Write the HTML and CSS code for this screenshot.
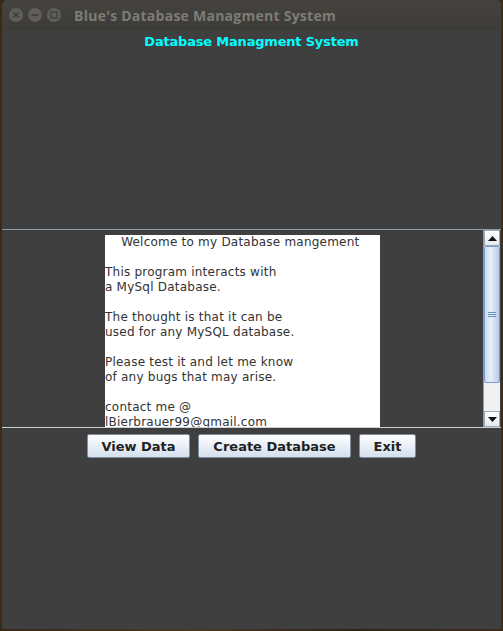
FILE: index.html
```html
<!DOCTYPE html>
<html>
<head>
<meta charset="utf-8">
<link rel="stylesheet" href="styles.css">
</head>
<body>
<div class="window">
  <div class="titlebar">
    <div class="controls">
      <span class="ctl"><svg width="14" height="14" viewBox="0 0 14 14"><path d="M4.5 4.5L9.5 9.5M9.5 4.5L4.5 9.5" stroke="#3c3b37" stroke-width="1.4"/></svg></span>
      <span class="ctl"><svg width="14" height="14" viewBox="0 0 14 14"><path d="M3.5 7H10.5" stroke="#3c3b37" stroke-width="1.5"/></svg></span>
      <span class="ctl"><svg width="14" height="14" viewBox="0 0 14 14"><rect x="4" y="4" width="6" height="6" fill="none" stroke="#3c3b37" stroke-width="1.2"/></svg></span>
    </div>
    <div class="title">Blue's Database Managment System</div>
  </div>
  <div class="content">
    <div class="heading">Database Managment System</div>
    <div class="spacer"></div>
    <div class="pane">
      <div class="viewport">
        <div class="textarea">
          <div class="line">&nbsp;&nbsp;&nbsp;&nbsp;Welcome to my Database mangement</div>
          <div class="line">&nbsp;</div>
          <div class="line">This program interacts with</div>
          <div class="line">a MySql Database.</div>
          <div class="line">&nbsp;</div>
          <div class="line">The thought is that it can be</div>
          <div class="line">used for any MySQL database.</div>
          <div class="line">&nbsp;</div>
          <div class="line">Please test it and let me know</div>
          <div class="line">of any bugs that may arise.</div>
          <div class="line">&nbsp;</div>
          <div class="line">contact me @</div>
          <div class="line">lBierbrauer99@gmail.com</div>
        </div>
      </div>
      <div class="scrollbar">
        <div class="arrow up"><svg width="9" height="5" viewBox="0 0 9 5"><path d="M0 5L4.5 0L9 5Z" fill="#111"/></svg></div>
        <div class="thumb"><span class="grip"></span></div>
        <div class="track"></div>
        <div class="arrow down"><svg width="9" height="5" viewBox="0 0 9 5"><path d="M0 0L4.5 5L9 0Z" fill="#111"/></svg></div>
      </div>
    </div>
    <div class="buttons">
      <button class="btn b1">View Data</button>
      <button class="btn b2">Create Database</button>
      <button class="btn b3">Exit</button>
    </div>
  </div>
</div>
</body>
</html>
```
FILE: styles.css
```css
html, body {
  margin: 0;
  padding: 0;
}
body {
  width: 503px;
  height: 631px;
  overflow: hidden;
  background: linear-gradient(90deg, #3a2b17 0%, #4a3820 40%, #2e2416 70%, #3d2e1a 100%);
}
.window {
  margin-left: 2px;
  width: 499px;
  height: 629px;
  display: flex;
  flex-direction: column;
  background: #3f3f3f;
  border-radius: 6px 6px 0 0;
  overflow: hidden;
}
.titlebar {
  height: 30px;
  flex: none;
  background: linear-gradient(#45443f, #3c3b37);
  display: flex;
  align-items: center;
}
.controls {
  display: flex;
  gap: 5px;
  padding-left: 7px;
}
.ctl {
  width: 14px;
  height: 14px;
  border-radius: 50%;
  background: #5f5e5a;
  display: flex;
}
.title {
  margin-left: 13px;
  font-family: "Open Sans", "DejaVu Sans", sans-serif;
  font-weight: 700;
  font-size: 14px;
  color: #7d7c77;
  letter-spacing: 0.25px;
}
.content {
  flex: 1;
  display: flex;
  flex-direction: column;
  background: #3f3f3f;
}
.heading {
  margin-top: 4px;
  height: 16px;
  line-height: 16px;
  text-align: center;
  font-family: "DejaVu Sans", sans-serif;
  font-weight: 700;
  font-size: 13px;
  color: #00ffff;
  letter-spacing: -0.2px;
}
.spacer {
  height: 179px;
}
.pane {
  margin-left: -1px;
  height: 197px;
  border-top: 1px solid #8d9cab;
  border-bottom: 1px solid #c8d0d8;
  border-left: 1px solid #8d9cab;
  display: flex;
}
.viewport {
  flex: 1;
  display: flex;
  justify-content: center;
  overflow: hidden;
  padding-top: 5px;
}
.textarea {
  width: 275px;
  background: #ffffff;
  font-family: "DejaVu Sans", sans-serif;
  font-size: 12px;
  color: #333333;
  line-height: 15px;
  letter-spacing: 0.22px;
  white-space: nowrap;
  overflow: hidden;
}
.line {
  height: 15px;
}
.scrollbar {
  width: 16px;
  display: flex;
  flex-direction: column;
  border-left: 1px solid #8d9cab;
  background: #eef0f2;
  margin-right: 1px;
}
.arrow {
  height: 16px;
  flex: none;
  display: flex;
  align-items: center;
  justify-content: center;
  background: linear-gradient(#ffffff, #e6e9ec);
  border: 1px solid #9aa8b6;
  box-sizing: border-box;
}
.thumb {
  height: 137px;
  flex: none;
  background: linear-gradient(90deg, #c9daf0, #e8f0fa 40%, #b8cde6);
  border: 1px solid #7a9cc6;
  box-sizing: border-box;
  border-radius: 2px;
  display: flex;
  align-items: center;
  justify-content: center;
}
.grip {
  width: 8px;
  height: 5px;
  border-top: 1px solid #6d8fbf;
  border-bottom: 1px solid #6d8fbf;
  box-sizing: border-box;
  position: relative;
}
.grip::after {
  content: "";
  position: absolute;
  left: 0;
  right: 0;
  top: 1px;
  border-top: 1px solid #6d8fbf;
}
.track {
  flex: 1;
  background: #eef0f2;
}
.buttons {
  display: flex;
  justify-content: center;
  gap: 8px;
  margin-top: 6px;
}
.btn {
  height: 24px;
  padding: 0;
  border: 1px solid #7f8fa0;
  border-radius: 2px;
  background: linear-gradient(#ffffff, #e9eff6 50%, #d4e0ee);
  font-family: "DejaVu Sans", sans-serif;
  font-weight: 700;
  font-size: 13px;
  color: #222222;
}
.b1 { width: 103px; }
.b2 { width: 153px; }
.b3 { width: 57px; }
```
